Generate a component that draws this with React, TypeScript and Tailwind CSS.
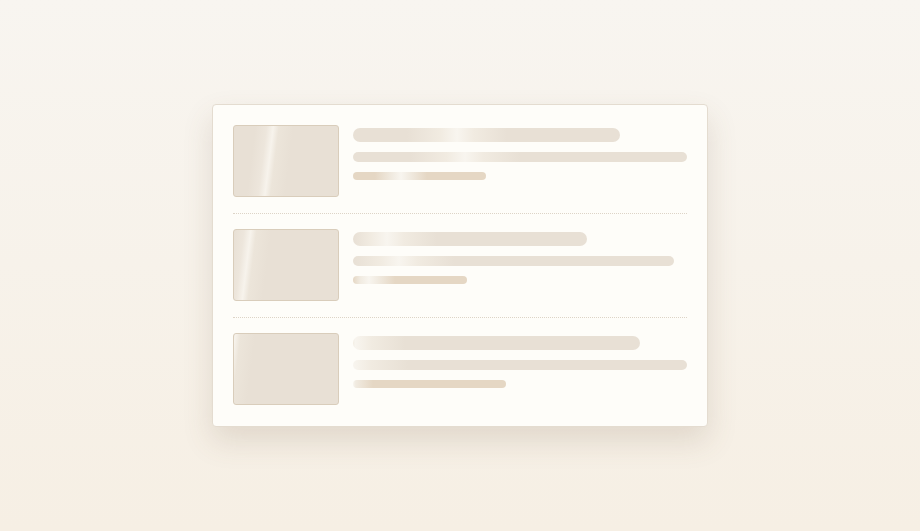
import React from "react";

type Row = {
  thumbPeak: number;
  lines: { w: number; peak: number }[];
};

const rows: Row[] = [
  { thumbPeak: 35, lines: [{ w: 267, peak: 104 }, { w: 334, peak: 112 }, { w: 133, peak: 48 }] },
  { thumbPeak: 15, lines: [{ w: 234, peak: 34 }, { w: 321, peak: 46 }, { w: 114, peak: 16 }] },
  { thumbPeak: 1, lines: [{ w: 287, peak: 2 }, { w: 334, peak: 0 }, { w: 153, peak: -6 }] },
];

function lineBg(base: string, peak: number, spread: number) {
  return `linear-gradient(90deg, ${base} 0px, ${base} ${peak - spread}px, #f1ebe1 ${peak - spread / 3}px, #f8f5ef ${peak}px, #f1ebe1 ${peak + spread / 3}px, ${base} ${peak + spread}px, ${base} 100%)`;
}

function thumbBg(p: number) {
  return `linear-gradient(97deg, #e8e0d5 0%, #e8e0d5 ${p - 16}%, #ede6dc ${p - 6}%, #f7f3ec ${p}%, #ece5da ${p + 5}%, #e8e0d5 ${p + 18}%, #e8e0d5 100%)`;
}

export default function App() {
  return (
    <div className="flex h-[531px] w-full items-center justify-center bg-gradient-to-b from-[#f8f5f0] to-[#f6efe4]">
      <div className="flex w-[496px] flex-col rounded-[4px] border border-[#e4dcd0] bg-[#fefdf9] px-5 pt-5 pb-[21px] shadow-[0_14px_30px_rgba(110,90,60,0.16)]">
        {rows.map((r, i) => (
          <React.Fragment key={i}>
            {i > 0 && <div className="my-[15.5px] border-t border-dotted border-[#ddd4c7]" />}
            <div className="flex h-[72px] gap-[14px]">
              <div
                className="h-[72px] w-[106px] shrink-0 rounded-[3px] border border-[#d9cdbb]"
                style={{ backgroundImage: thumbBg(r.thumbPeak) }}
              />
              <div className="flex flex-1 flex-col pt-[3px]">
                <div
                  className="h-[14px] rounded-full"
                  style={{ width: r.lines[0].w, backgroundImage: lineBg("#e8e0d5", r.lines[0].peak, 50) }}
                />
                <div
                  className="mt-[10px] h-[10px] rounded-full"
                  style={{ width: r.lines[1].w, backgroundImage: lineBg("#e8e0d5", r.lines[1].peak, 55) }}
                />
                <div
                  className="mt-[10px] h-[8px] rounded-full"
                  style={{ width: r.lines[2].w, backgroundImage: lineBg("#e5d7c4", r.lines[2].peak, 26) }}
                />
              </div>
            </div>
          </React.Fragment>
        ))}
      </div>
    </div>
  );
}
